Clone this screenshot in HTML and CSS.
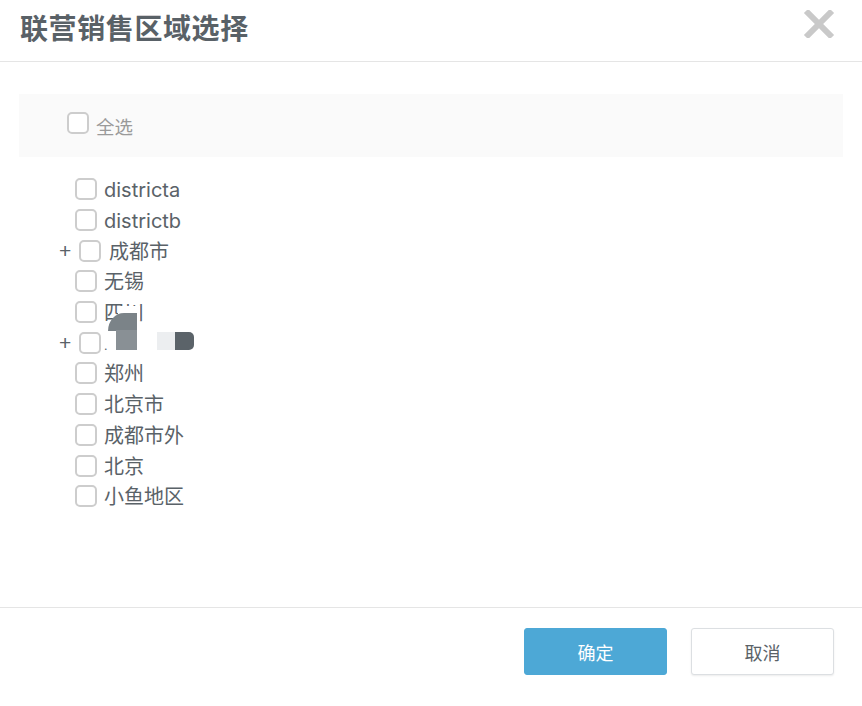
FILE: index.html
```html
<!DOCTYPE html>
<html lang="zh-CN">
<head>
<meta charset="utf-8">
<title>联营销售区域选择</title>
<link rel="stylesheet" href="styles.css">
</head>
<body>
<div class="dialog">
  <header class="dlg-header">
    <h1 class="dlg-title">联营销售区域选择</h1>
    <span class="dlg-close" aria-label="关闭">
      <svg width="32" height="28" viewBox="0 0 32 28"><path d="M3 1 L29 27 M29 1 L3 27" stroke="#c9c9c9" stroke-width="6" fill="none"/></svg>
    </span>
  </header>
  <main class="dlg-body">
    <div class="all-panel">
      <label class="all-item"><span class="cb"></span><span class="all-text">全选</span></label>
    </div>
    <ul class="tree">
      <li class="node"><span class="sw"></span><span class="cb"></span><span class="lbl">districta</span></li>
      <li class="node"><span class="sw"></span><span class="cb"></span><span class="lbl">districtb</span></li>
      <li class="node parent"><span class="sw">+</span><span class="cb"></span><span class="lbl">成都市</span></li>
      <li class="node"><span class="sw"></span><span class="cb"></span><span class="lbl">无锡</span></li>
      <li class="node"><span class="sw"></span><span class="cb"></span><span class="lbl">四川</span></li>
      <li class="node parent"><span class="sw">+</span><span class="cb"></span><span class="lbl dot">.</span></li>
      <li class="node"><span class="sw"></span><span class="cb"></span><span class="lbl">郑州</span></li>
      <li class="node"><span class="sw"></span><span class="cb"></span><span class="lbl">北京市</span></li>
      <li class="node"><span class="sw"></span><span class="cb"></span><span class="lbl">成都市外</span></li>
      <li class="node"><span class="sw"></span><span class="cb"></span><span class="lbl">北京</span></li>
      <li class="node"><span class="sw"></span><span class="cb"></span><span class="lbl">小鱼地区</span></li>
      <li class="glitch" aria-hidden="true">
        <span class="g-white"></span>
        <span class="g-top"></span>
        <span class="g-bottom"></span>
        <span class="g-light"></span>
        <span class="g-dark"></span>
      </li>
    </ul>
  </main>
  <footer class="dlg-footer">
    <button class="btn btn-primary">确定</button>
    <button class="btn btn-default">取消</button>
  </footer>
</div>
</body>
</html>
```

FILE: styles.css
```css
* { box-sizing: border-box; }
html, body { margin: 0; padding: 0; background: #fff; }
body {
  font-family: Inter, "Noto Sans CJK SC", sans-serif;
  color: #5a6268;
}
.dialog {
  width: 862px;
  height: 706px;
  display: flex;
  flex-direction: column;
}
.dlg-header {
  height: 62px;
  border-bottom: 1px solid #e5e5e5;
  display: flex;
  align-items: flex-start;
  justify-content: space-between;
  padding: 0 27px 0 20px;
}
.dlg-title {
  margin: 0;
  margin-top: 10px;
  font-size: 28px;
  line-height: 34px;
  font-weight: 700;
  letter-spacing: 0.6px;
  color: #596167;
  font-family: "Noto Sans CJK SC", sans-serif;
}
.dlg-close {
  margin-top: 10px;
  display: block;
  width: 32px;
  height: 28px;
}
.dlg-close svg { display: block; }
.dlg-body {
  flex: 1;
  padding: 32px 19px 0 19px;
}
.all-panel {
  height: 63px;
  background: #fafafa;
  display: flex;
  align-items: flex-start;
  padding: 18px 0 0 48px;
}
.all-item {
  display: flex;
  align-items: flex-start;
  gap: 7px;
}
.all-text {
  font-family: "Noto Sans CJK SC", sans-serif;
  font-size: 18.5px;
  line-height: 20px;
  margin-top: 4px;
  color: #9a9a9a;
}
.cb {
  display: inline-block;
  width: 22px;
  height: 22px;
  border: 2.5px solid #cdcdcd;
  border-radius: 5px;
  background: #fff;
  flex: none;
}
.tree {
  list-style: none;
  margin: 17px 0 0 0;
  padding: 0 0 0 41px;
  position: relative;
}
.node {
  height: 30.7px;
  display: flex;
  align-items: center;
  font-size: 20px;
}
.sw {
  width: 15px;
  flex: none;
  font-family: "Liberation Sans", sans-serif;
  font-size: 21px;
  line-height: 20px;
  color: #5a6268;
}
.parent .sw { width: 20px; margin-left: -1px; padding-right: 1px; }
.lbl {
  margin-left: 7px;
  line-height: 24px;
  padding-top: 2px;
  white-space: nowrap;
}
.parent .lbl { margin-left: 8px; }
.lbl.dot { font-size: 12px; align-self: flex-end; margin-bottom: 0; margin-left: 3px; }

/* rendering artefact overlay in the reference */
.glitch {
  position: absolute;
  left: 0;
  top: 0;
  width: 0;
  height: 0;
}
.glitch span { position: absolute; display: block; }
/* coordinates relative to tree origin (x=19, y=174) */
.g-white { left: 99px; top: 132px; width: 22px; height: 14px; background: #fff; }
.g-top {
  left: 89px; top: 139px; width: 29px; height: 18px;
  background: #7b8388;
  border-top-left-radius: 16px 18px;
}
.g-bottom { left: 97px; top: 156px; width: 21px; height: 20px; background: #899095; }
.g-light { left: 138px; top: 158px; width: 18px; height: 18px; background: #eceef0; }
.g-dark {
  left: 156px; top: 158px; width: 19px; height: 18px; background: #5b6369;
  border-radius: 0 5px 5px 0;
}
.dlg-footer {
  height: 99px;
  border-top: 1px solid #e5e5e5;
  display: flex;
  justify-content: flex-end;
  align-items: flex-start;
  gap: 24px;
  padding: 20px 28px 0 0;
}
.btn {
  width: 143px;
  height: 47px;
  border-radius: 3px;
  font-family: "Noto Sans CJK SC", sans-serif;
  font-size: 18px;
  cursor: pointer;
}
.btn-primary {
  background: #4da8d6;
  border: 1px solid #4da8d6;
  color: #fff;
}
.btn-default {
  background: #fff;
  border: 1px solid #dcdfe2;
  color: #5a6268;
  box-shadow: 0 1px 2px rgba(0,0,0,0.08);
}
```
